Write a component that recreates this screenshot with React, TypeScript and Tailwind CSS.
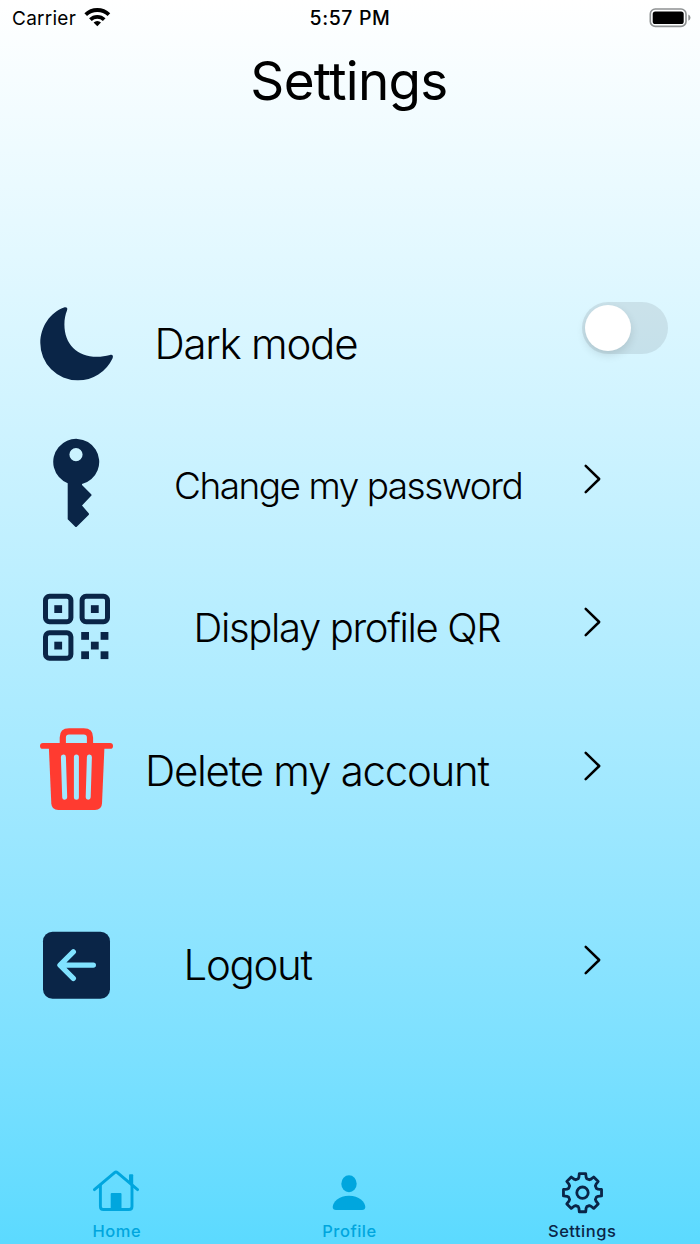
import React, { useState } from "react";

const NAVY = "#0A2547";

function MoonIcon() {
  return (
    <svg width="80" height="143" viewBox="0 0 80 143" fill={NAVY} aria-hidden="true">
      <path d="M28 35.5C30.5 34.8 32 36 31 38.5C29.4 42.5 28.4 47 28.4 52.5C28.4 72 41 84.8 61 84.8C65.5 84.8 69.5 84.2 74 83C76.5 82.3 77.6 83.8 76.6 86.2A38 38 0 0 1 41.5 108.3A37.2 37.2 0 0 1 4.3 71C4.3 55 14 40.5 28 35.5Z" />
    </svg>
  );
}

function KeyIcon() {
  return (
    <svg width="80" height="143" viewBox="0 0 80 143" fill={NAVY} aria-hidden="true">
      <path
        fillRule="evenodd"
        d="M31.7 67.2A23 23 0 1 1 46 68.1V69L55.2 78.2Q56 79 55.2 79.8L46 89.5L52.7 97.3Q53.4 98.2 52.6 99L41 110.6Q40 111.6 39 110.6L31.7 103.3ZM40 32A6.6 6.6 0 1 0 40 45.2A6.6 6.6 0 1 0 40 32Z"
      />
    </svg>
  );
}

function QrIcon() {
  return (
    <svg width="80" height="143" viewBox="0 0 80 143" fill={NAVY} aria-hidden="true">
      <g fill="none" stroke={NAVY} strokeWidth="5">
        <rect x="9.5" y="37.3" width="25.4" height="25.4" rx="4" />
        <rect x="46.1" y="37.3" width="25.4" height="25.4" rx="4" />
        <rect x="9.5" y="73.8" width="25.4" height="25.4" rx="4" />
      </g>
      <rect x="18.3" y="46.2" width="7.8" height="7.8" />
      <rect x="54.9" y="46.2" width="7.8" height="7.8" />
      <rect x="18.3" y="82.7" width="7.8" height="7.8" />
      <rect x="45.2" y="73" width="7.8" height="7.8" />
      <rect x="64.6" y="73" width="7.8" height="7.8" />
      <rect x="54.9" y="82.7" width="7.8" height="7.8" />
      <rect x="45.2" y="92.3" width="7.8" height="7.8" />
      <rect x="64.6" y="92.3" width="7.8" height="7.8" />
    </svg>
  );
}

function TrashIcon() {
  return (
    <svg width="80" height="143" viewBox="0 0 80 143" aria-hidden="true">
      <mask id="slits">
        <rect width="80" height="143" fill="#fff" />
        <path d="M27.4 54L28.7 94.3M40.4 54V94.3M53.4 54L52.2 94.3" stroke="#000" strokeWidth="5" strokeLinecap="round" />
      </mask>
      <g fill="#FF3B30" mask="url(#slits)">
        <rect x="4" y="40" width="73" height="5.8" rx="2.9" />
        <path d="M12.8 43H68.5L66 100.5Q65.6 107 59 107H22.3Q15.7 107 15.3 100.5Z" />
        <path d="M26.8 42V34.5Q26.8 28.4 33 28.4H47.8Q54 28.4 54 34.5V42" fill="none" stroke="#FF3B30" strokeWidth="6.2" />
      </g>
    </svg>
  );
}

function LogoutIcon() {
  return (
    <svg width="80" height="143" viewBox="0 0 80 143" aria-hidden="true">
      <rect x="7" y="34.7" width="67" height="67" rx="9.5" fill={NAVY} />
      <path
        d="M57.3 68.1H24.5M37.3 54.9L24 68.1L37.3 81.3"
        fill="none"
        stroke="#80E2FF"
        strokeWidth="5.4"
        strokeLinecap="round"
        strokeLinejoin="round"
      />
    </svg>
  );
}

function HomeIcon() {
  return (
    <svg width="48" height="48" viewBox="0 0 48 48" fill="none" stroke="currentColor" strokeWidth="2.9" aria-hidden="true">
      <path d="M2.4 21.6L22.6 4.6Q24 3.4 25.4 4.6L45.6 21.6" strokeLinecap="round" />
      <path d="M8.4 17V38.4Q8.4 41.5 11.5 41.5H36.9Q40 41.5 40 38.4V17" />
      <path d="M37 14.5V7.2Q37 6.3 37.9 6.3H40.3Q41.2 6.3 41.2 7.2V19Z" fill="currentColor" stroke="none" />
      <path d="M18.7 42V26Q18.7 25 19.7 25H28.5Q29.5 25 29.5 26V42Z" fill="currentColor" stroke="none" />
    </svg>
  );
}

function ProfileIcon() {
  return (
    <svg width="48" height="48" viewBox="0 0 48 48" fill="currentColor" aria-hidden="true">
      <ellipse cx="24" cy="15.8" rx="7.7" ry="8.5" />
      <path d="M11 42Q7.7 42 7.7 39C7.7 34 14 27.7 24 27.7C34 27.7 40.3 34 40.3 39Q40.3 42 37 42Z" />
    </svg>
  );
}

const TEETH = 8;

function gearPath() {
  const points: string[] = [];
  for (let i = 0; i < TEETH; i++) {
    const mid = (360 / TEETH) * i - 90;
    for (const [radius, offset] of [[14.6, -17], [16, -13], [19.3, -9.5], [19.3, 9.5], [16, 13], [14.6, 17]]) {
      const a = ((mid + offset) * Math.PI) / 180;
      points.push(`${(24.5 + radius * Math.cos(a)).toFixed(2)} ${(24.7 + radius * Math.sin(a)).toFixed(2)}`);
    }
  }
  return `M${points.join("L")}Z`;
}

function GearIcon() {
  return (
    <svg width="48" height="48" viewBox="0 0 48 48" fill="none" stroke="currentColor" strokeWidth="2.8" strokeLinejoin="round" aria-hidden="true">
      <path d={gearPath()} />
      <circle cx="24.5" cy="24.7" r="5.7" />
    </svg>
  );
}

function Chevron() {
  return (
    <svg width="20" height="32" viewBox="0 0 20 32" fill="none" className="mt-[47px] shrink-0" aria-hidden="true">
      <path d="M3.7 2.8L17.2 16L3.7 29.2" stroke="#000" strokeWidth="2.5" strokeLinecap="round" strokeLinejoin="round" />
    </svg>
  );
}

function StatusBar() {
  return (
    <div className="grid h-9 grid-cols-3 items-center px-[9px] text-[19px] leading-none">
      <div className="flex items-center gap-[7px] pl-[3px]">
        <span className="tracking-[0.25px]">Carrier</span>
        <svg width="28" height="24" viewBox="0 0 28 24" aria-hidden="true">
          <g fill="none" stroke="#000" strokeWidth="3.8">
            <path d="M2.7 8.7A16.7 16.7 0 0 1 25.9 8.7" />
            <path d="M7.4 13.6A9.9 9.9 0 0 1 21.2 13.6" />
          </g>
          <path d="M10.6 16.6A5.2 5.2 0 0 1 18 16.6L14.3 20.3Z" />
        </svg>
      </div>
      <span className="pt-0.5 text-center text-[19.5px] font-[550] tracking-[0.6px]">5:57 PM</span>
      <svg width="42" height="20" viewBox="0 0 42 20" className="-mt-px justify-self-end" aria-hidden="true">
        <rect x="1.3" y="1" width="35.7" height="17.4" rx="5" fill="none" stroke="#8E9192" strokeWidth="1.6" />
        <rect x="3.7" y="3.4" width="31" height="12.6" rx="2.6" />
        <path d="M39.3 6.6Q41.5 7.6 41.5 9.7T39.3 12.8Z" fill="#8E9192" />
      </svg>
    </div>
  );
}

function Switch() {
  const [on, setOn] = useState(false);
  return (
    <button
      type="button"
      role="switch"
      aria-checked={on}
      aria-label="Dark mode"
      onClick={() => setOn((v) => !v)}
      className={`mt-[30px] flex h-[52px] w-[86px] shrink-0 items-center rounded-full px-[3px] ${
        on ? "justify-end bg-[#34C759]" : "justify-start bg-[#6E7C80]/17"
      }`}
    >
      <span className="size-[46px] rounded-full bg-white shadow-[0_4px_10px_rgba(0,0,0,0.12)]" />
    </button>
  );
}

type RowProps = {
  icon: React.ReactNode;
  label: string;
  labelClass: string;
  heightClass: string;
  action?: React.ReactNode;
};

function SettingsRow({ icon, label, labelClass, heightClass, action }: RowProps) {
  return (
    <li className={`flex items-start pl-9 ${heightClass}`}>
      <div className="w-20 shrink-0">{icon}</div>
      <span className={`flex flex-1 items-center whitespace-nowrap font-light ${labelClass}`}>{label}</span>
      {action ?? (
        <div className="mr-[98px]">
          <Chevron />
        </div>
      )}
    </li>
  );
}

function TabItem({ icon, label, active }: { icon: React.ReactNode; label: string; active?: boolean }) {
  return (
    <button type="button" className={`flex flex-col items-center ${active ? "text-[#0A2547]" : "text-[#00A6DE]"}`}>
      {icon}
      <span className="mt-[5px] pl-px text-[16.5px] font-[450] leading-5 tracking-[0.5px]">{label}</span>
    </button>
  );
}

export default function App() {
  return (
    <div className="flex h-[1244px] w-[700px] flex-col overflow-hidden bg-linear-to-b from-white to-[#5BDAFF] font-['Inter',sans-serif] text-black">
      <StatusBar />
      <h1 className="mt-[13px] h-[223px] pr-0.5 text-center text-[53px] leading-[64px] tracking-[-0.7px]">Settings</h1>
      <ul className="flex-1">
        <SettingsRow
          icon={<MoonIcon />}
          label="Dark mode"
          labelClass="h-[142px] pl-[38.5px] text-[42px] tracking-[-1.25px]"
          heightClass="h-36"
          action={<div className="mr-8"><Switch /></div>}
        />
        <SettingsRow
          icon={<KeyIcon />}
          label="Change my password"
          labelClass="h-[139px] pl-[58px] text-[37px] tracking-[-1.5px]"
          heightClass="h-[143px]"
        />
        <SettingsRow
          icon={<QrIcon />}
          label="Display profile QR"
          labelClass="h-[138px] pl-[77.5px] text-[40px] tracking-[-1.35px]"
          heightClass="h-36"
        />
        <SettingsRow
          icon={<TrashIcon />}
          label="Delete my account"
          labelClass="h-[134px] pl-[29px] text-[42px] tracking-[-1.25px]"
          heightClass="h-[194px]"
        />
        <SettingsRow
          icon={<LogoutIcon />}
          label="Logout"
          labelClass="h-[134px] pl-[67.5px] text-[42px] tracking-[-1.3px]"
          heightClass="h-36"
        />
      </ul>
      <nav className="grid h-[76px] grid-cols-3 pr-[2px]">
        <TabItem icon={<HomeIcon />} label="Home" />
        <TabItem icon={<ProfileIcon />} label="Profile" />
        <TabItem icon={<GearIcon />} label="Settings" active />
      </nav>
    </div>
  );
}
